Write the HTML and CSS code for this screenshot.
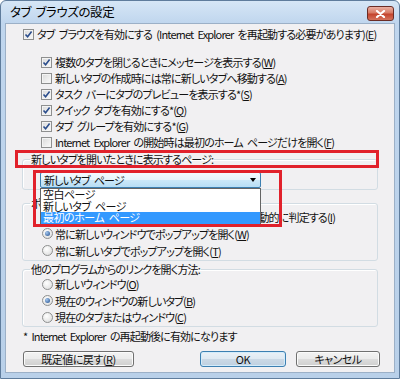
FILE: index.html
```html
<!DOCTYPE html>
<html lang="ja">
<head>
<meta charset="utf-8">
<title>タブ ブラウズの設定</title>
<link rel="stylesheet" href="styles.css">
</head>
<body>
<div class="window">
  <div class="titlebar">
    <span class="title">タブ ブラウズの設定</span>
    <span class="close"><svg width="11" height="8" viewBox="0 0 11 8"><path d="M2 1 L9 7 M9 1 L2 7" stroke="#fff" stroke-width="2.2" stroke-linecap="round"/></svg></span>
  </div>
  <div class="client">
    <div class="row main"><span class="cb on"><svg width="9" height="9" viewBox="0 0 9 9"><path d="M1.5 4.5 L3.6 6.8 L7.6 1.6" fill="none" stroke="#2b4d8c" stroke-width="1.6"/></svg></span><span>タブ ブラウズを有効にする (Internet Explorer を再起動する必要があります)(<u>E</u>)</span></div>
    <div class="sub">
      <div class="row"><span class="cb on"><svg width="9" height="9" viewBox="0 0 9 9"><path d="M1.5 4.5 L3.6 6.8 L7.6 1.6" fill="none" stroke="#2b4d8c" stroke-width="1.6"/></svg></span><span>複数のタブを閉じるときにメッセージを表示する(<u>W</u>)</span></div>
      <div class="row"><span class="cb"></span><span>新しいタブの作成時には常に新しいタブへ移動する(<u>A</u>)</span></div>
      <div class="row"><span class="cb on"><svg width="9" height="9" viewBox="0 0 9 9"><path d="M1.5 4.5 L3.6 6.8 L7.6 1.6" fill="none" stroke="#2b4d8c" stroke-width="1.6"/></svg></span><span>タスク バーにタブのプレビューを表示する*(<u>S</u>)</span></div>
      <div class="row"><span class="cb on"><svg width="9" height="9" viewBox="0 0 9 9"><path d="M1.5 4.5 L3.6 6.8 L7.6 1.6" fill="none" stroke="#2b4d8c" stroke-width="1.6"/></svg></span><span>クイック タブを有効にする*(<u>Q</u>)</span></div>
      <div class="row"><span class="cb on"><svg width="9" height="9" viewBox="0 0 9 9"><path d="M1.5 4.5 L3.6 6.8 L7.6 1.6" fill="none" stroke="#2b4d8c" stroke-width="1.6"/></svg></span><span>タブ グループを有効にする*(<u>G</u>)</span></div>
      <div class="row"><span class="cb"></span><span>Internet Explorer の開始時は最初のホーム ページだけを開く(<u>F</u>)</span></div>
    </div>

    <fieldset class="group g1">
      <legend>新しいタブを開いたときに表示するページ:</legend>
      <div class="combo-wrap">
        <div class="combo"><span>新しいタブ ページ</span><span class="arrow"></span></div>
        <ul class="droplist">
          <li>空白ページ</li>
          <li>新しいタブ ページ</li>
          <li class="sel">最初のホーム ページ</li>
        </ul>
      </div>
    </fieldset>

    <fieldset class="group g2">
      <legend>ポップアップの発生時:</legend>
      <div class="row r1"><span class="rb"></span><span>ポップアップの開き方を Internet Explorer で自動的に判定する(<u>I</u>)</span></div>
      <div class="row r2"><span class="rb on"></span><span>常に新しいウィンドウでポップアップを開く(<u>W</u>)</span></div>
      <div class="row r3"><span class="rb"></span><span>常に新しいタブでポップアップを開く(<u>T</u>)</span></div>
    </fieldset>

    <fieldset class="group g3">
      <legend>他のプログラムからのリンクを開く方法:</legend>
      <div class="row q1"><span class="rb"></span><span>新しいウィンドウ(<u>O</u>)</span></div>
      <div class="row q2"><span class="rb on"></span><span>現在のウィンドウの新しいタブ(<u>B</u>)</span></div>
      <div class="row q3"><span class="rb"></span><span>現在のタブまたはウィンドウ(<u>C</u>)</span></div>
    </fieldset>

    <p class="note">* Internet Explorer の再起動後に有効になります</p>

    <div class="buttons">
      <button class="btn reset">既定値に戻す(<u>R</u>)</button>
      <button class="btn ok">OK</button>
      <button class="btn cancel">キャンセル</button>
    </div>

    <div class="mark mark1"></div>
    <div class="mark mark2"></div>
  </div>
</div>
</body>
</html>
```

FILE: styles.css
```css
* { box-sizing: border-box; }
html, body { margin: 0; padding: 0; }
body {
  width: 400px;
  height: 379px;
  overflow: hidden;
  background: #fff;
  font-family: "Noto Sans CJK JP", "Noto Sans", sans-serif;
  font-size: 11px;
  letter-spacing: -0.85px;
  word-spacing: 2.5px;
  color: #111;
  font-feature-settings: "palt";
}

.window {
  width: 400px;
  height: 379px;
  display: flex;
  flex-direction: column;
  border: 1px solid #5f7c9c;
  border-radius: 6px 6px 0 0;
  background: linear-gradient(180deg, #d6e6f6 0, #c0d6ee 22px, #b9d0e9 100%);
  padding: 0 4px 5px;
}

.titlebar {
  height: 22px;
  flex: none;
  display: flex;
  align-items: flex-start;
}
.title {
  line-height: 22px;
  font-size: 12.5px;
  letter-spacing: -0.4px;
  word-spacing: 2px;
  padding-left: 5px;
  color: #000;
}
.close {
  margin-left: auto;
  margin-top: 5px;
  margin-right: 1px;
  width: 27px;
  height: 15px;
  border: 1px solid #6b2c25;
  border-radius: 3px;
  background: linear-gradient(180deg, #eab0a3 0%, #d87a64 45%, #c4432c 55%, #d5735c 100%);
  display: flex;
  align-items: center;
  justify-content: center;
}

.client {
  flex: 1;
  position: relative;
  background: #f1f0f2;
  border: 1px solid #9cb0c7;
  padding: 2px 16px 0;
}

.row {
  display: flex;
  align-items: center;
  height: 16px;
  white-space: pre;
}
.main { padding-left: 1px; }
.sub { margin-top: 12px; padding-left: 19px; }

.cb {
  flex: none;
  width: 11px;
  height: 11px;
  margin-right: 3px;
  border: 1px solid #8e8f8f;
  background: linear-gradient(135deg, #d9d9d9, #fbfbfb);
  box-shadow: inset 0 0 0 1px #f3f3f3;
  display: flex;
  align-items: center;
  justify-content: center;
}

.rb {
  flex: none;
  width: 11px;
  height: 11px;
  margin-right: 2px;
  border-radius: 50%;
  border: 1px solid #8e8f8f;
  background: radial-gradient(circle at 40% 35%, #ffffff, #d8d8d8);
  display: flex;
  align-items: center;
  justify-content: center;
}
.rb.on::after {
  content: "";
  width: 5px;
  height: 5px;
  border-radius: 50%;
  background: radial-gradient(circle at 35% 35%, #a6c8ef, #1d4a8a);
}

.group {
  margin: 0;
  min-width: 0;
  border: 1px solid #d2dce3;
  border-radius: 3px;
  padding: 0 0 1px 19px;
  box-shadow: inset 1px 1px 0 #fff;
}
.group legend {
  padding: 0 1px;
  margin-left: -12px;
  line-height: 12px;
}
.g1 { margin-top: 2px; }
.g1 legend { line-height: 14px; }
.g2 { margin-top: 7px; }
.g2 .r1 { margin-top: -1px; height: 17px; }
.g2 .r2, .g2 .r3 { height: 17px; }
.g3 { margin-top: 2px; }
.g3 .q1 { margin-top: 1px; }
.g3 .q2 { height: 17px; }

.combo-wrap {
  position: relative;
  margin: 6px 0 0 -2px;
  width: 221px;
}
.combo {
  height: 16px;
  border: 1px solid #3c7fb1;
  border-radius: 2px;
  background: linear-gradient(180deg, #f4fafe 0%, #e6f3fb 50%, #cce8f8 51%, #b7def5 100%);
  display: flex;
  align-items: center;
  justify-content: space-between;
  padding: 0 4px 0 3px;
}
.arrow {
  width: 0;
  height: 0;
  border-left: 3.5px solid transparent;
  border-right: 3.5px solid transparent;
  border-top: 4px solid #000;
}
.droplist {
  position: absolute;
  top: 100%;
  left: 0;
  width: 100%;
  margin: 0;
  padding: 0;
  list-style: none;
  background: #fff;
  border: 1px solid #646464;
  z-index: 2;
}
.droplist li {
  line-height: 11.5px;
  height: 11.5px;
  padding-left: 2px;
  white-space: pre;
  letter-spacing: -0.5px;
}
.droplist li.sel {
  background: #3399ff;
  color: #fff;
}

.note {
  margin: 3px 0 0 1px;
  line-height: 12px;
}

.buttons {
  display: flex;
  margin-top: 9px;
  padding-left: 1px;
}
.btn {
  height: 16px;
  padding: 0;
  font: inherit;
  letter-spacing: -0.5px;
  line-height: 14px;
  color: #111;
  border: 1px solid #707070;
  border-radius: 3px;
  background: linear-gradient(180deg, #f3f3f3 0%, #ebebeb 49%, #dddddd 50%, #cfcfcf 100%);
  box-shadow: inset 0 0 0 1px #fbfbfb;
}
.reset { width: 111px; }
.ok {
  width: 86px;
  margin-left: auto;
  border-color: #3c7fb1;
  background: linear-gradient(180deg, #eaf1f7 0%, #dfe9f2 49%, #cbd9e6 50%, #bfd0e0 100%);
  box-shadow: inset 0 0 0 1px #d3ecfb;
}
.cancel { width: 84px; margin-left: 10px; margin-right: -2px; }

.mark {
  position: absolute;
  border: 3px solid #e1212b;
  z-index: 3;
}
.mark1 { left: 9px; top: 126px; width: 364px; height: 18px; }
.mark2 { left: 27px; top: 146px; width: 249px; height: 57px; }
```
